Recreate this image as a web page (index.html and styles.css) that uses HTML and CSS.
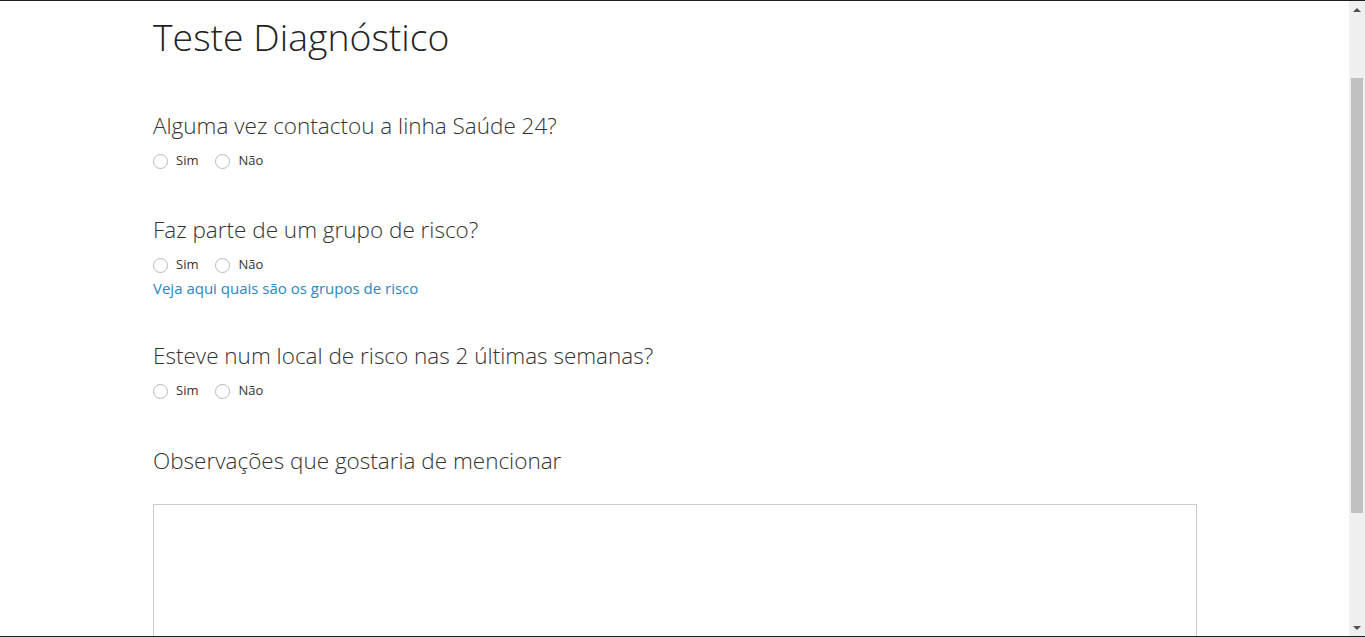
FILE: index.html
```html
<!DOCTYPE html>
<html lang="pt">
<head>
<meta charset="utf-8">
<title>Teste Diagnóstico</title>
<link rel="stylesheet" href="styles.css">
</head>
<body>
<div class="frame">
  <main class="page">
    <div class="container">
      <h1 class="title">Teste Diagnóstico</h1>

      <section class="question">
        <h2 class="q-label">Alguma vez contactou a linha Saúde 24?</h2>
        <div class="options">
          <label class="option"><span class="radio"></span>Sim</label>
          <label class="option"><span class="radio"></span>Não</label>
        </div>
      </section>

      <section class="question">
        <h2 class="q-label">Faz parte de um grupo de risco?</h2>
        <div class="options">
          <label class="option"><span class="radio"></span>Sim</label>
          <label class="option"><span class="radio"></span>Não</label>
        </div>
        <a class="link" href="#">Veja aqui quais são os grupos de risco</a>
      </section>

      <section class="question">
        <h2 class="q-label">Esteve num local de risco nas 2 últimas semanas?</h2>
        <div class="options">
          <label class="option"><span class="radio"></span>Sim</label>
          <label class="option"><span class="radio"></span>Não</label>
        </div>
      </section>

      <section class="question notes">
        <h2 class="q-label">Observações que gostaria de mencionar</h2>
        <div class="textarea"></div>
      </section>
    </div>
  </main>
  <div class="scrollbar">
    <div class="arrow up"></div>
    <div class="track"><div class="thumb"></div></div>
    <div class="arrow down"></div>
  </div>
</div>
</body>
</html>
```
FILE: styles.css
```css
* { box-sizing: border-box; }
html, body { margin: 0; padding: 0; }
body {
  width: 1365px;
  height: 637px;
  overflow: hidden;
  background: #fff;
  font-family: "Open Sans", "Liberation Sans", sans-serif;
  color: #222;
}
.frame {
  display: flex;
  height: 637px;
  border-top: 1px solid #1e1e1e;
  border-bottom: 1px solid #1e1e1e;
}
.page {
  flex: 1;
  overflow: hidden;
}
.container {
  padding-left: 153px;
  width: 1197px;
}
.title {
  margin: 0;
  padding-top: 12px;
  font-weight: 300;
  font-size: 37.4px;
  line-height: 48px;
  color: #222;
}
.question { margin-top: 49px; }
.question + .question { margin-top: 42px; }
.question + .notes { margin-top: 43px; }
.q-label {
  margin: 0;
  font-weight: 300;
  font-size: 22.5px;
  line-height: 32px;
  color: #333;
}
.options {
  display: flex;
  gap: 17px;
  margin-top: 6px;
  height: 24px;
  align-items: center;
}
.option {
  display: flex;
  align-items: center;
  font-size: 13px;
  color: #333;
}
.radio {
  width: 15px;
  height: 15px;
  border: 1px solid #b5b9c0;
  border-radius: 50%;
  margin-right: 8px;
  margin-top: 3px;
}
.link {
  display: block;
  font-size: 15px;
  line-height: 20px;
  color: #2b87c1;
  text-decoration: none;
  margin-top: 2px;
}
.textarea {
  margin-top: 27px;
  width: 1044px;
  height: 200px;
  border: 1px solid #ccc;
}
.scrollbar {
  width: 16px;
  background: #f0f0f0;
  display: flex;
  flex-direction: column;
}
.arrow {
  height: 17px;
  display: flex;
  align-items: center;
  justify-content: center;
}
.arrow::before {
  content: "";
  border-left: 4px solid transparent;
  border-right: 4px solid transparent;
}
.arrow.up::before { border-bottom: 4px solid #505050; }
.arrow.down::before { border-top: 4px solid #505050; }
.track {
  flex: 1;
  padding: 60px 2px 106px;
}
.thumb {
  height: 100%;
  background: #c1c1c1;
}
```
